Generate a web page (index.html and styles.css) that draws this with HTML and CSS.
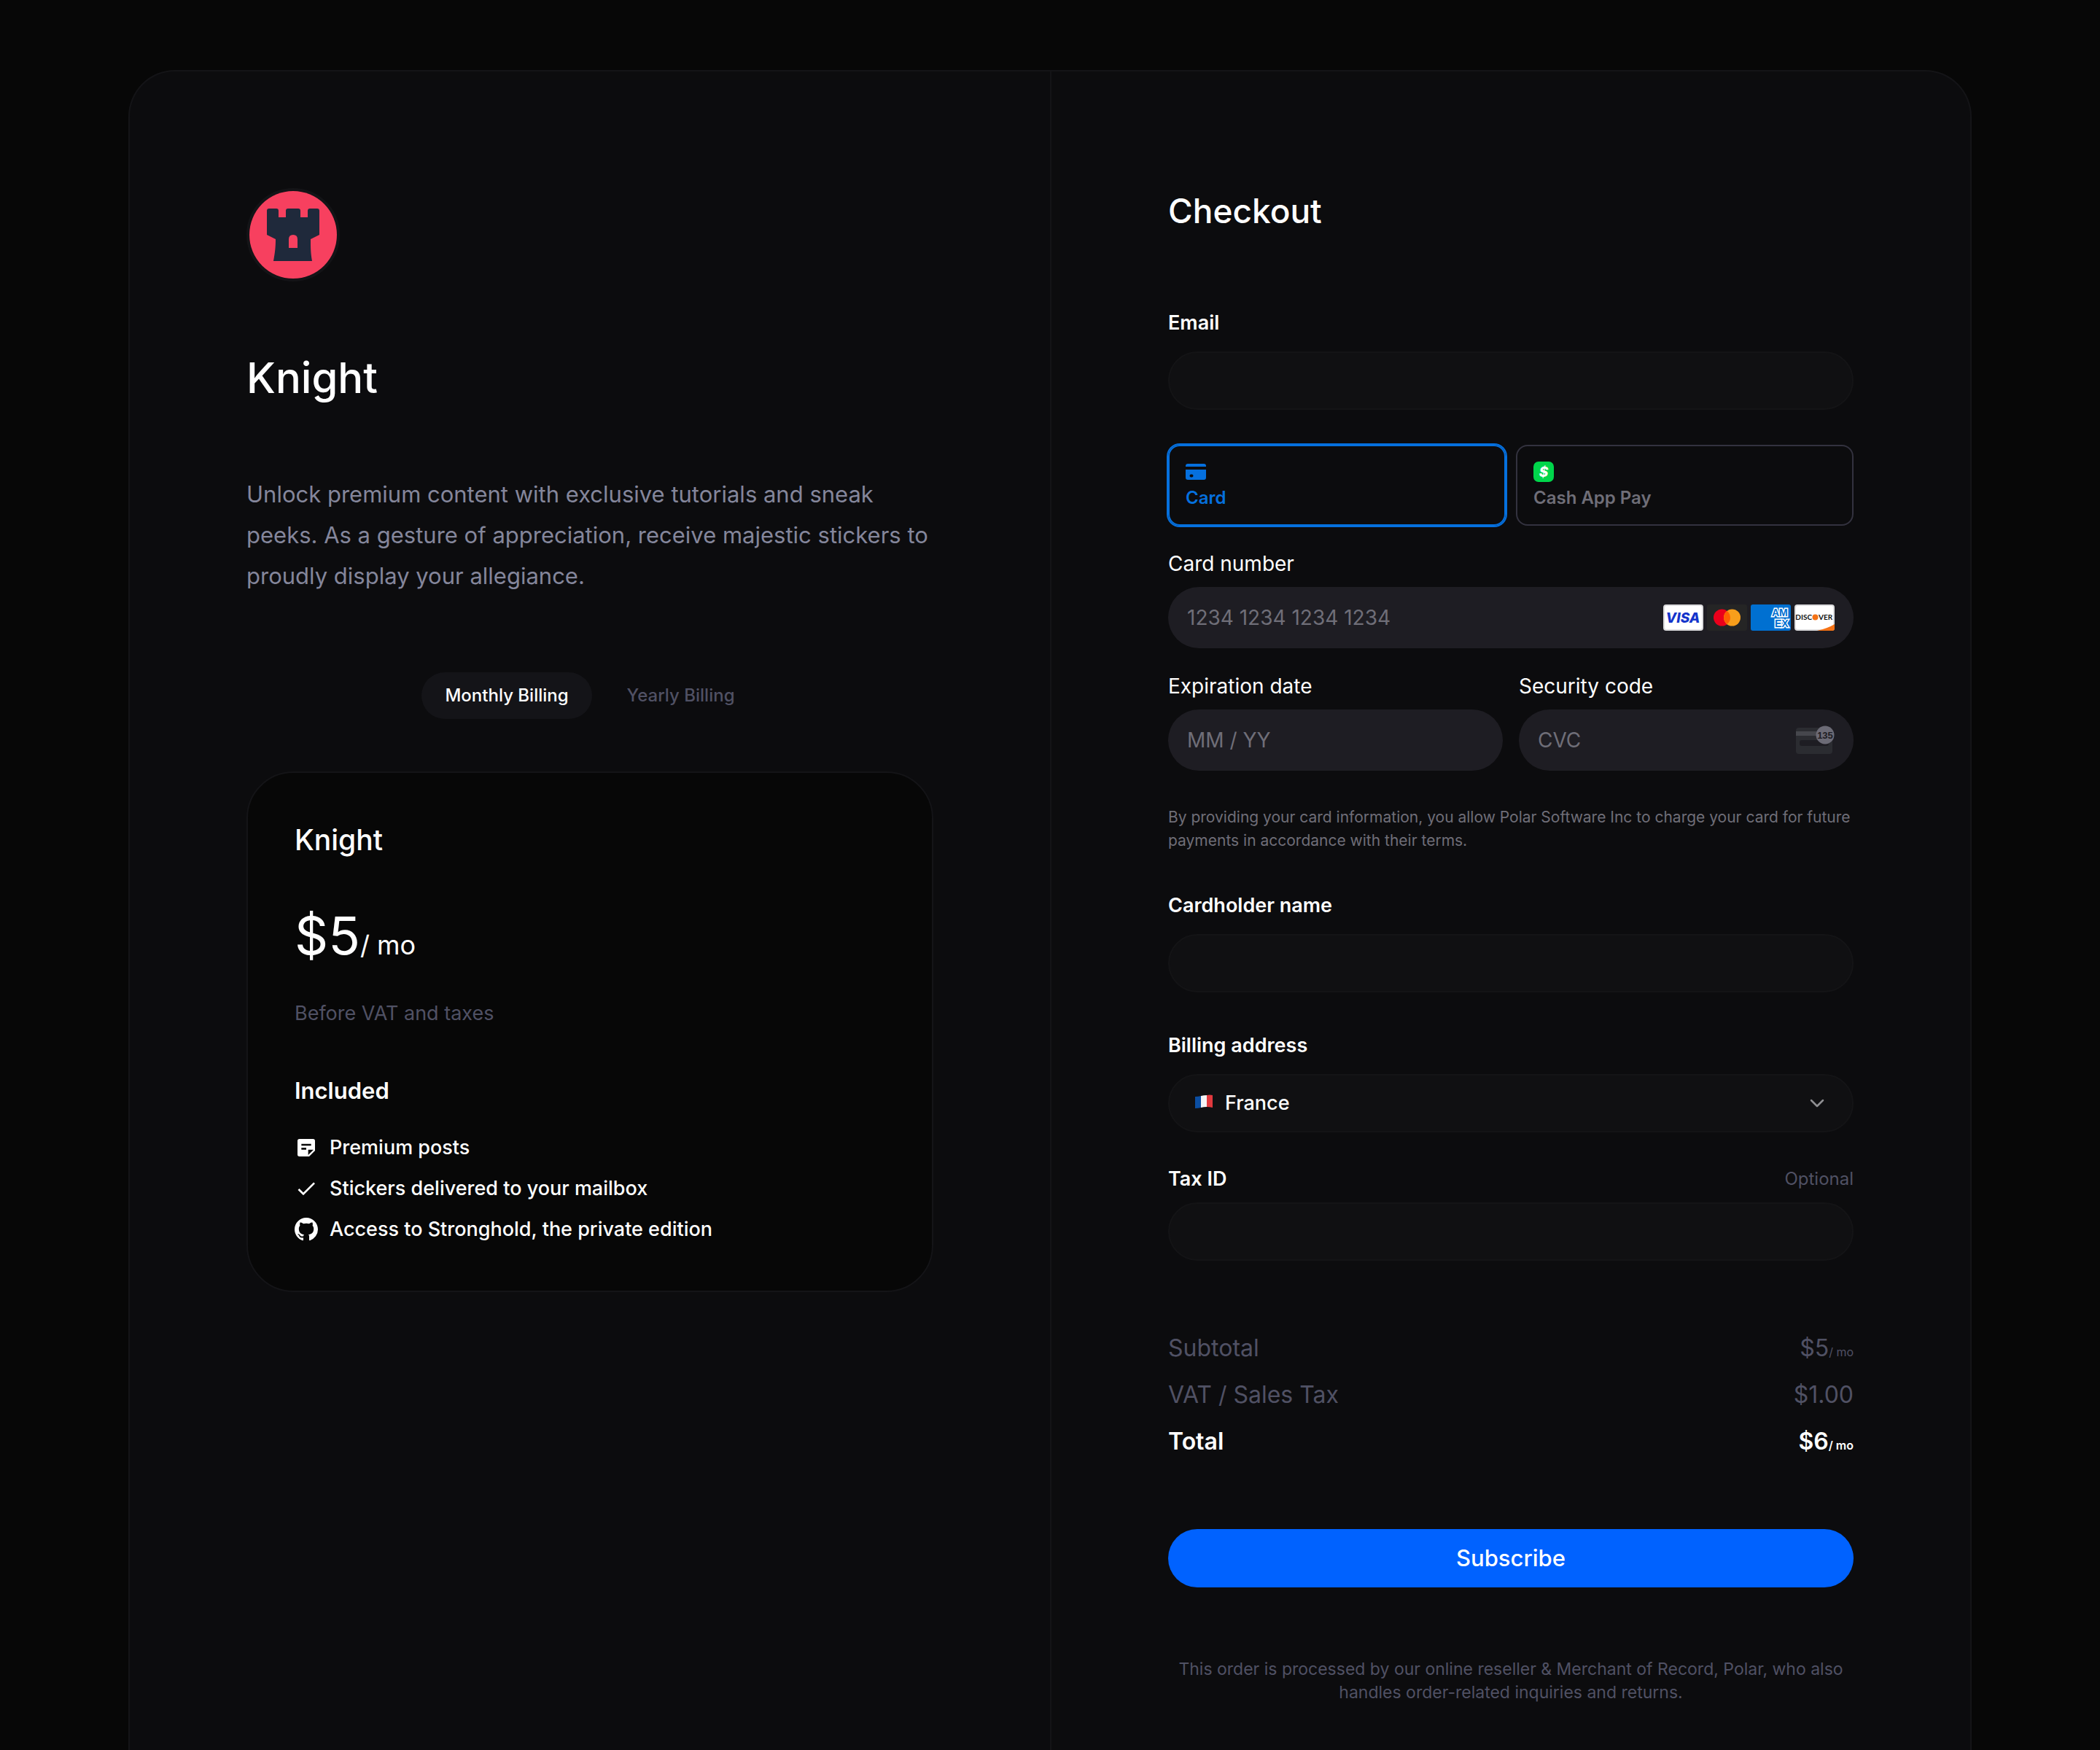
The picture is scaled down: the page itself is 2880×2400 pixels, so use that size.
FILE: index.html
```html
<!DOCTYPE html>
<html lang="en">
<head>
<meta charset="utf-8">
<meta name="viewport" content="width=device-width, initial-scale=1">
<title>Checkout – Knight</title>
<link rel="stylesheet" href="styles.css">
</head>
<body>
<main class="panel">
  <section class="product">
    <svg class="avatar" viewBox="0 0 120 120" role="img" aria-label="Knight logo">
      <rect width="120" height="120" fill="#f7405f"/>
      <path fill="#1f293b" d="M24 27q0-3 3-3h10q3 0 3 3v9h10v-9q0-3 3-3h14q3 0 3 3v9h10v-9q0-3 3-3h10q3 0 3 3v33l-12 6c0 12 0 18 2 30H33c2-12 3-18 3-30l-12-6z"/>
      <path fill="#f7405f" d="M54 78V66q0-6 6-6t6 6v12z"/>
    </svg>
    <h1 class="product-title">Knight</h1>
    <p class="description">Unlock premium content with exclusive tutorials and sneak peeks. As a gesture of appreciation, receive majestic stickers to proudly display your allegiance.</p>
    <div class="billing">
      <button type="button" class="billing-option billing-option-active" aria-pressed="true">Monthly Billing</button>
      <button type="button" class="billing-option" aria-pressed="false">Yearly Billing</button>
    </div>
    <article class="plan">
      <h2 class="plan-title">Knight</h2>
      <p class="price">$5<span class="price-unit">/ mo</span></p>
      <p class="tax-note">Before VAT and taxes</p>
      <h3 class="included">Included</h3>
      <ul class="benefits">
        <li class="benefit">
          <svg class="benefit-icon" viewBox="0 0 24 24" aria-hidden="true"><path fill="currentColor" d="M19 3H5a2 2 0 0 0-2 2v14a2 2 0 0 0 2 2h10l6-6V5a2 2 0 0 0-2-2zm-7 11H7v-2h5zm5-4H7V8h10zm-3 9.500V14h5.500z"/></svg>
          Premium posts
        </li>
        <li class="benefit">
          <svg class="benefit-icon" viewBox="0 0 24 24" aria-hidden="true"><path fill="currentColor" d="M9 16.170 4.830 12l-1.420 1.410L9 19 21 7l-1.410-1.410z"/></svg>
          Stickers delivered to your mailbox
        </li>
        <li class="benefit">
          <svg class="benefit-icon" viewBox="0 0 16 16" aria-hidden="true"><path fill="currentColor" d="M8 0C3.580 0 0 3.580 0 8c0 3.540 2.290 6.530 5.470 7.590.4.070.55-.17.55-.38 0-.19-.01-.82-.01-1.490-2.010.37-2.530-.49-2.690-.94-.09-.23-.48-.94-.82-1.130-.28-.15-.68-.52-.01-.53.63-.01 1.080.58 1.230.82.72 1.210 1.870.87 2.330.66.07-.52.28-.87.51-1.070-1.780-.2-3.640-.89-3.640-3.950 0-.87.31-1.590.82-2.150-.08-.2-.36-1.020.08-2.120 0 0 .67-.21 2.200.82.64-.18 1.320-.27 2-.27s1.360.09 2 .27c1.530-1.040 2.200-.82 2.200-.82.44 1.100.16 1.920.08 2.120.51.56.82 1.270.82 2.150 0 3.070-1.870 3.750-3.650 3.950.29.25.54.73.54 1.480 0 1.070-.01 1.930-.01 2.200 0 .21.15.46.55.38A8.010 8.010 0 0 0 16 8c0-4.420-3.580-8-8-8z"/></svg>
          Access to Stronghold, the private edition
        </li>
      </ul>
    </article>
  </section>

  <form class="checkout">
    <h2 class="checkout-title">Checkout</h2>

    <div class="field field-email">
      <label class="label" for="email">Email</label>
      <input class="input" id="email" type="email">
    </div>

    <div class="methods">
      <button type="button" class="method method-active" aria-pressed="true">
        <svg class="method-icon" viewBox="0 0 28 28" aria-hidden="true"><path fill="currentColor" d="M0 7V6q0-3 3-3h22q3 0 3 3v1z"/><path fill="currentColor" fill-rule="evenodd" d="M0 11h28v11q0 3-3 3H3q-3 0-3-3zm7.500 6.500a2 2 0 0 0 0 4h1a2 2 0 0 0 0-4z"/></svg>
        Card
      </button>
      <button type="button" class="method" aria-pressed="false">
        <svg class="method-icon" viewBox="0 0 28 28" aria-hidden="true"><rect width="28" height="28" rx="7" fill="#00d64b"/><text x="14" y="21" text-anchor="middle" class="cash-sign">$</text></svg>
        Cash App Pay
      </button>
    </div>

    <div class="field field-tight">
      <label class="label label-card" for="number">Card number</label>
      <div class="secure">
        <input class="secure-input" id="number" type="text" inputmode="numeric" placeholder="1234 1234 1234 1234">
        <div class="brands">
          <svg class="brand" viewBox="0 0 55 36" role="img" aria-label="Visa"><rect x="1" y="1" width="53" height="34" rx="3" fill="#fff" stroke="#dcdcde" stroke-width="2"/><text x="27" y="25" text-anchor="middle" class="visa-word">VISA</text></svg>
          <svg class="brand" viewBox="0 0 55 36" role="img" aria-label="Mastercard"><rect width="55" height="36" rx="3" fill="#252525"/><circle cx="20.500" cy="18" r="11.500" fill="#eb001b"/><circle cx="34.500" cy="18" r="11.500" fill="#f79e1b"/><path fill="#ff5f00" d="M27.500 8.900a11.500 11.500 0 0 1 0 18.200 11.500 11.500 0 0 1 0-18.200z"/></svg>
          <svg class="brand" viewBox="0 0 55 36" role="img" aria-label="American Express"><rect width="55" height="36" rx="3" fill="#0070d1"/><text class="amex-word"><tspan x="29" y="16">AM</tspan><tspan x="33" y="31">EX</tspan></text></svg>
          <svg class="brand" viewBox="0 0 55 36" role="img" aria-label="Discover"><rect x="1" y="1" width="53" height="34" rx="3" fill="#fff" stroke="#dcdcde" stroke-width="2"/><path fill="#f47216" d="M31 36q14-3 24-9v6q0 3-3 3z"/><circle cx="28.500" cy="17.500" r="4" fill="#f47216"/><text x="24" y="21" text-anchor="end" class="discover-word">DISC</text><text x="33" y="21" class="discover-word">VER</text></svg>
        </div>
      </div>
    </div>

    <div class="pair">
      <div class="field field-tight">
        <label class="label label-card" for="expiry">Expiration date</label>
        <div class="secure">
          <input class="secure-input" id="expiry" type="text" placeholder="MM / YY">
        </div>
      </div>
      <div class="field field-tight">
        <label class="label label-card" for="cvc">Security code</label>
        <div class="secure">
          <input class="secure-input" id="cvc" type="text" placeholder="CVC">
          <svg class="cvc-icon" viewBox="0 0 54 40" aria-hidden="true"><rect x="1" y="3" width="50" height="36" rx="4" fill="#2b2c31"/><path fill="#46474d" d="M1 8h50v6H1z"/><rect x="6" y="20" width="40" height="8" rx="3" fill="#1e1d23"/><circle cx="41" cy="13" r="12.500" fill="#6c6b76"/><text x="41" y="18" text-anchor="middle" class="cvc-digits">135</text></svg>
        </div>
      </div>
    </div>

    <p class="terms">By providing your card information, you allow Polar Software Inc to charge your card for future payments in accordance with their terms.</p>

    <div class="field field-name">
      <label class="label" for="name">Cardholder name</label>
      <input class="input" id="name" type="text">
    </div>

    <div class="field field-address">
      <label class="label" for="country">Billing address</label>
      <div class="select-wrap">
        <svg class="flag" viewBox="0 0 26 20" aria-hidden="true"><path fill="#0b4ea2" d="M1 3q4 0 8-1v16q-4 1-8 1z"/><path fill="#f4f4f6" d="M9 2q4-1 8-1v16q-4 0-8 1z"/><path fill="#e1393e" d="M17 1q4-1 8 0v17q-4-1-8-1z"/></svg>
        <select class="select" id="country"><option>France</option></select>
        <svg class="chevron" viewBox="0 0 20 12" aria-hidden="true"><path d="M2 2l8 8 8-8" fill="none" stroke="#8f8f92" stroke-width="2.500" stroke-linecap="round" stroke-linejoin="round"/></svg>
      </div>
    </div>

    <div class="field field-tight field-tax">
      <div class="label-row">
        <label class="label" for="tax">Tax ID</label>
        <span class="optional">Optional</span>
      </div>
      <input class="input" id="tax" type="text">
    </div>

    <dl class="totals">
      <div class="total-row"><dt>Subtotal</dt><dd>$5<span class="total-unit">/ mo</span></dd></div>
      <div class="total-row"><dt>VAT / Sales Tax</dt><dd>$1.00</dd></div>
      <div class="total-row total-row-final"><dt>Total</dt><dd>$6<span class="total-unit">/ mo</span></dd></div>
    </dl>

    <button type="submit" class="subscribe">Subscribe</button>
    <p class="legal">This order is processed by our online reseller &amp; Merchant of Record, Polar, who also handles order-related inquiries and returns.</p>
  </form>
</main>
</body>
</html>
```
FILE: styles.css
```css
:root {
  --page: #070707;
  --surface: #0c0c0e;
  --line: #141417;
  --muted: #505164;
  --soft: #84869b;
}

* {
  box-sizing: border-box;
}

body {
  margin: 0;
  min-height: 100vh;
  display: flex;
  padding: 96px 176px 0;
  background: var(--page);
  color: #fff;
  font-family: Inter, "Liberation Sans", sans-serif;
  font-size: 27px;
  line-height: 40px;
}

h1, h2, h3, p, ul, dl, dd {
  margin: 0;
  padding: 0;
}

button, input, select {
  margin: 0;
  font: inherit;
  color: inherit;
}

.panel {
  flex: 1;
  display: grid;
  grid-template-columns: minmax(0, 1fr) minmax(0, 1fr);
  border: 2px solid var(--line);
  border-bottom: 0;
  border-radius: 64px 64px 0 0;
  background: var(--surface);
}

/* Product column */

.product {
  padding: 160px 160px 64px;
}

.avatar {
  display: block;
  width: 128px;
  height: 128px;
  border: 4px solid var(--line);
  border-radius: 50%;
}

.product-title {
  margin-top: 96px;
  font-size: 58px;
  font-weight: 500;
  line-height: 72px;
}

.description {
  margin-top: 96px;
  font-size: 31px;
  line-height: 56px;
  color: var(--soft);
}

.billing {
  display: flex;
  justify-content: center;
  gap: 16px;
  margin-top: 104px;
}

.billing-option {
  height: 64px;
  padding: 0 32px;
  border: 0;
  border-radius: 32px;
  background: none;
  color: var(--muted);
  font-size: 24px;
  font-weight: 500;
}

.billing-option-active {
  background: #141418;
  color: #fff;
}

.plan {
  margin-top: 72px;
  padding: 64px;
  border: 2px solid var(--line);
  border-radius: 64px;
  background: var(--page);
}

.plan-title {
  font-size: 39px;
  font-weight: 500;
  line-height: 56px;
}

.price {
  margin-top: 64px;
  font-size: 72px;
  line-height: 78px;
}

.price-unit {
  font-size: 36px;
  line-height: 1;
}

.tax-note {
  margin-top: 48px;
  color: var(--muted);
}

.included {
  margin-top: 64px;
  font-size: 31px;
  font-weight: 600;
  line-height: 44px;
}

.benefits {
  display: flex;
  flex-direction: column;
  gap: 16px;
  margin-top: 36px;
  list-style: none;
  font-weight: 500;
}

.benefit {
  display: flex;
  align-items: center;
  gap: 16px;
}

.benefit-icon {
  width: 32px;
  height: 32px;
}

/* Checkout column */

.checkout {
  padding: 160px 160px 64px;
  border-left: 2px solid var(--line);
}

.checkout-title {
  font-size: 46px;
  font-weight: 500;
  line-height: 62px;
}

.field {
  display: flex;
  flex-direction: column;
  gap: 19px;
}

.field-tight {
  gap: 12px;
  margin-top: 32px;
}

.field-email {
  margin-top: 103px;
}

.field-name,
.field-address {
  margin-top: 53px;
}

.field-tax {
  margin-top: 44px;
}

.label {
  font-weight: 600;
}

.label-card {
  font-size: 28px;
  font-weight: 400;
}

.label-row {
  display: flex;
  justify-content: space-between;
}

.optional {
  font-size: 24px;
  color: var(--muted);
}

.input,
.select {
  width: 100%;
  height: 80px;
  padding: 0 32px;
  border: 2px solid #141416;
  border-radius: 40px;
  background: #101012;
  outline: 0;
}

.methods {
  display: grid;
  grid-template-columns: minmax(0, 1fr) minmax(0, 1fr);
  gap: 14px;
  margin-top: 48px;
}

.method {
  display: flex;
  flex-direction: column;
  align-items: flex-start;
  gap: 4px;
  padding: 21px 22px 18px;
  border: 2px solid #33323f;
  border-radius: 16px;
  background: none;
  color: #6f6e78;
  font-size: 24px;
  font-weight: 600;
  line-height: 36px;
}

.method-active {
  border-color: #0570de;
  box-shadow: 0 0 0 2px #0570de;
  color: #0570de;
}

.method-icon {
  width: 28px;
  height: 28px;
}

.cash-sign {
  fill: #fff;
  font-size: 19px;
  font-style: italic;
  font-weight: 800;
}

.secure {
  display: flex;
  align-items: center;
  height: 84px;
  padding: 0 26px;
  border-radius: 42px;
  background: #1e1d23;
}

.secure-input {
  flex: 1;
  min-width: 0;
  height: 60px;
  padding: 0;
  border: 0;
  background: none;
  font-size: 28px;
  outline: 0;
}

.secure-input::placeholder {
  color: #6f6e78;
  opacity: 1;
}

.brands {
  display: flex;
  gap: 5px;
}

.brand {
  width: 55px;
  height: 36px;
}

.visa-word {
  fill: #1434cb;
  font-size: 19px;
  font-style: italic;
  font-weight: 800;
}

.amex-word {
  fill: #0070d1;
  stroke: #fff;
  stroke-width: 3px;
  paint-order: stroke;
  font-family: "Liberation Sans", sans-serif;
  font-size: 14px;
  font-weight: 700;
}

.discover-word {
  fill: #111;
  font-family: Lato, sans-serif;
  font-size: 10px;
  font-weight: 700;
}

.cvc-icon {
  width: 54px;
  height: 40px;
}

.cvc-digits {
  fill: #1e1d23;
  font-family: "Liberation Sans", sans-serif;
  font-size: 13px;
  font-weight: 700;
}

.pair {
  display: grid;
  grid-template-columns: minmax(0, 1fr) minmax(0, 1fr);
  gap: 22px;
}

.terms {
  margin-top: 48px;
  font-size: 21px;
  line-height: 32px;
  color: #6f6e78;
}

.select-wrap {
  position: relative;
}

.select {
  display: block;
  appearance: none;
  padding-left: 76px;
  font-weight: 500;
}

.flag {
  position: absolute;
  top: 28px;
  left: 36px;
  width: 26px;
  height: 20px;
}

.chevron {
  position: absolute;
  top: 34px;
  right: 40px;
  width: 20px;
  height: 12px;
}

.totals {
  display: flex;
  flex-direction: column;
  gap: 16px;
  margin-top: 96px;
  font-size: 32px;
  line-height: 48px;
  color: var(--muted);
}

.total-row {
  display: flex;
  justify-content: space-between;
}

.total-row-final {
  color: #fff;
  font-weight: 600;
}

.total-unit {
  font-size: 16px;
  line-height: 1;
}

.subscribe {
  width: 100%;
  height: 80px;
  margin-top: 96px;
  border: 0;
  border-radius: 40px;
  background: #0062ff;
  color: #fff;
  font-size: 31px;
  font-weight: 500;
}

.legal {
  margin-top: 96px;
  font-size: 23px;
  line-height: 32px;
  text-align: center;
  color: var(--muted);
}
```
